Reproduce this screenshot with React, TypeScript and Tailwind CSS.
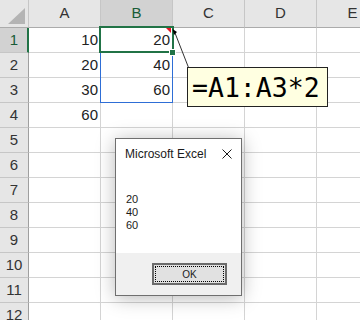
import { Fragment } from "react";

const COLS = ["A", "B", "C", "D", "E"];
const ROWS = Array.from({ length: 12 }, (_, i) => i + 1);

const values: Record<string, string> = {
  A1: "10",
  B1: "20",
  A2: "20",
  B2: "40",
  A3: "30",
  B3: "60",
  A4: "60",
};

export default function App() {
  return (
    <div className="relative h-[320px] w-[360px] overflow-hidden bg-white font-['Liberation_Sans',Arial,sans-serif]">
      {/* sheet */}
      <div className="grid w-max grid-cols-[29px_repeat(5,72px)] grid-rows-[28px_repeat(12,25px)]">
        <div className="flex items-end justify-end border-r border-b border-r-[#c6c6c6] border-b-[#ababab] bg-[#e6e6e6] pr-[3px] pb-[3px]">
          <svg width="17" height="16" viewBox="0 0 17 16">
            <polygon points="17,0 17,16 0,16" fill="#b4b4b4" />
          </svg>
        </div>
        {COLS.map((c) =>
          c === "B" ? (
            <div
              key={c}
              className="flex items-center justify-center border-r border-b border-r-[#c6c6c6] border-b-[#ababab] bg-[#d2d2d2] text-[15px] text-[#185c37]"
            >
              {c}
            </div>
          ) : (
            <div
              key={c}
              className="flex items-center justify-center border-r border-b border-r-[#c6c6c6] border-b-[#ababab] bg-[#e6e6e6] text-[15px] text-[#333]"
            >
              {c}
            </div>
          )
        )}
        {ROWS.map((r) => (
          <Fragment key={r}>
            {r === 1 ? (
              <div className="flex items-center justify-center border-r-2 border-b border-r-[#217346] border-b-[#c6c6c6] bg-[#d2d2d2] pl-[1px] text-[15px] text-[#185c37]">
                {r}
              </div>
            ) : (
              <div className="flex items-center justify-center border-r border-b border-r-[#9f9f9f] border-b-[#c6c6c6] bg-[#e6e6e6] text-[15px] text-[#333]">
                {r}
              </div>
            )}
            {COLS.map((c) => (
              <div
                key={c}
                className="flex items-center justify-end border-r border-b border-[#d4d4d4] pr-[2px] pt-[1px] text-[15px] text-[#222]"
              >
                {values[`${c}${r}`] ?? ""}
              </div>
            ))}
          </Fragment>
        ))}
      </div>

      {/* formula range + active cell */}
      <div className="absolute left-[100px] top-[27px] h-[76px] w-[73px] border border-[#2e6ed6]" />
      <div className="absolute left-[99px] top-[26px] h-[27px] w-[75px] border-2 border-[#217346]" />
      <div className="absolute left-[169px] top-[49px] h-[7px] w-[7px] border border-white bg-[#217346]" />

      {/* comment pointer */}
      <svg className="pointer-events-none absolute left-0 top-0" width="360" height="320">
        <polygon points="166,28 171,28 171,33" fill="#e81123" />
        <line x1="175" y1="33" x2="188.5" y2="67.5" stroke="#333" strokeWidth="1" />
        <polygon points="172.5,29 177,32 174,35" fill="#000" />
      </svg>

      {/* comment */}
      <div className="absolute left-[187px] top-[67px] h-[40px] w-[141px] border border-[#222] bg-[#ffffe1] pl-[4px] pt-[7px] font-['DejaVu_Sans_Mono',monospace] text-[26.5px] leading-[26px] text-black">
        =A1:A3*2
      </div>

      {/* message box */}
      <div className="absolute left-[115px] top-[138px] flex h-[158px] w-[127px] flex-col border border-[#6f6f6f] bg-white shadow-[0_2px_18px_rgba(0,0,0,0.28)]">
        <div className="flex-1">
          <div className="flex items-start justify-between pl-[9px] pr-[9px] pt-[7px]">
            <span className="text-[12px] leading-[16px] text-[#1a1a1a]">Microsoft Excel</span>
            <svg className="mt-[3px]" width="10" height="10" viewBox="0 0 10 10">
              <path d="M0.5 0.5 L9.5 9.5 M9.5 0.5 L0.5 9.5" stroke="#1a1a1a" strokeWidth="1" />
            </svg>
          </div>
          <div className="mt-[31px] pl-[10px] text-[11px] leading-[13px] text-[#1a1a1a]">
            <div>20</div>
            <div>40</div>
            <div>60</div>
          </div>
        </div>
        <div className="flex h-[42px] items-start justify-end bg-[#f0f0f0] pr-[14px] pt-[10px]">
          <div className="h-[22px] w-[75px] border-2 border-[#6b6b6b] bg-[#e1e1e1] p-[1px]">
            <div className="flex h-full w-full items-center justify-center border border-dotted border-black text-[10px] text-[#1a1a1a]">
              OK
            </div>
          </div>
        </div>
      </div>
    </div>
  );
}
